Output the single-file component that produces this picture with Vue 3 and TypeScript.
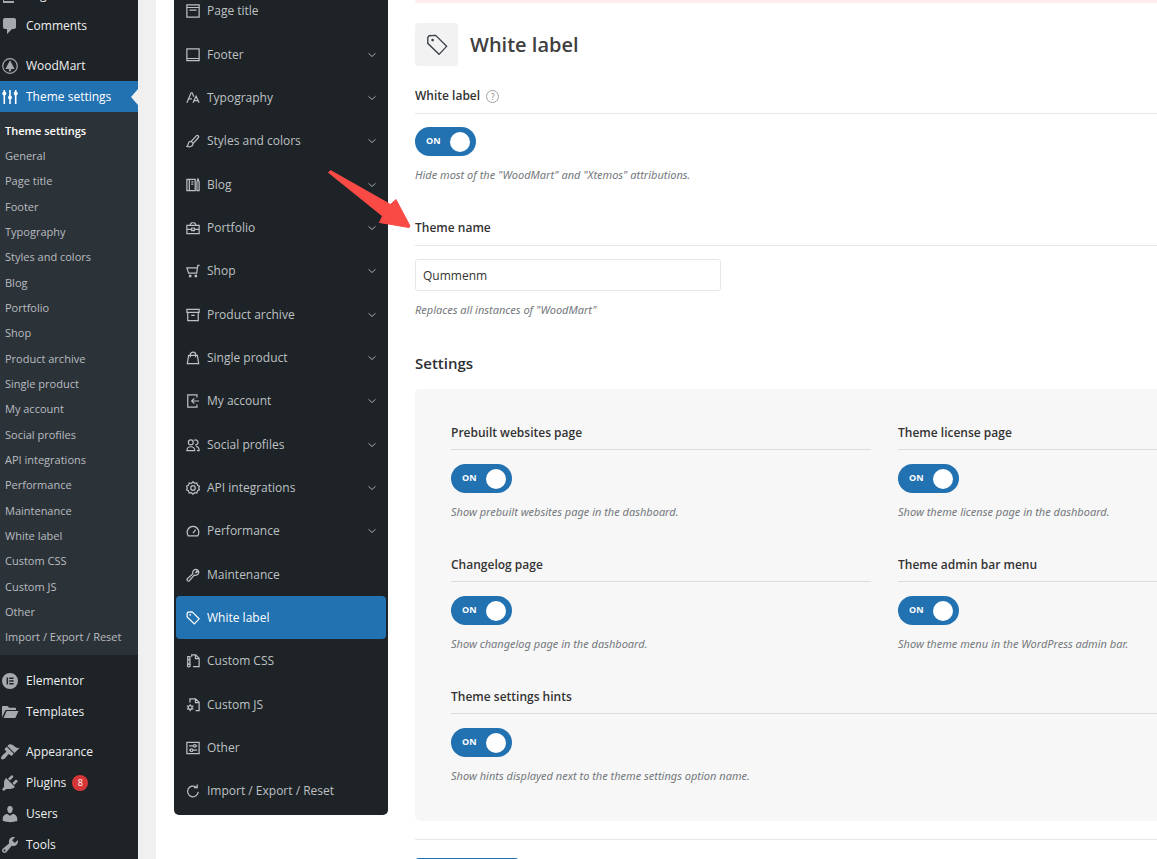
<script setup lang="ts">
import { ref } from 'vue'

interface MenuItem {
  label: string
  icon: string
  badge?: number
  gap?: boolean
}

interface SectionItem {
  label: string
  icon: string
  expandable: boolean
}

interface Option {
  id: string
  title: string
  hint: string
  wide?: boolean
}

const adminIcons: Record<string, string> = {
  pages: '<path d="M6 2h11v12H6zM4 5v11h10v2H3V5z"/>',
  comments:
    '<path d="M5 2h9c1.1 0 2 .9 2 2v7c0 1.1-.9 2-2 2h-2l-5 5v-5H5c-1.1 0-2-.9-2-2V4c0-1.1.9-2 2-2z"/>',
  woodmart:
    '<circle cx="10" cy="10" r="7.3" fill="none" stroke="currentColor" stroke-width="1.2"/><path d="M10 4.2l4.6 8.8h-3.8l.5 2.2H8.700l.5-2.200H5.400z"/>',
  sliders:
    '<path d="M3.500 3h1.600v14H3.500zM9.200 3h1.600v14H9.200zM14.900 3h1.600v14h-1.600z"/><circle cx="4.300" cy="6.500" r="2"/><circle cx="10" cy="10.500" r="2"/><circle cx="15.700" cy="6.500" r="2"/>',
  elementor:
    '<path fill-rule="evenodd" d="M10 2a8 8 0 100 16 8 8 0 000-16zM6.600 6.600h1.500v6.800H6.600zM9.300 6.600h4.300V8H9.300zM9.300 9.300h4.300v1.400H9.300zM9.300 12h4.300v1.400H9.300z"/>',
  templates:
    '<path d="M2 15.500V5c0-.6.400-1 1-1h4.500l1.700 1.800H15c.6 0 1 .4 1 1V8H6.300c-.5 0-1 .3-1.200.8z"/><path d="M3.600 16L6.300 9.600c.1-.3.400-.5.700-.5H18.500L15.600 15.500c-.1.300-.4.500-.7.500z"/>',
  appearance:
    '<path d="M14.480 11.060L7.410 3.990l1.500-1.500c.5-.56 2.300-.47 3.510.32 1.210.8 1.430 1.280 2.910 2.100 1.180.64 2.450 1.260 4.450.85zm-.71.71L6.700 4.700 4.930 6.470c-.39.39-.39 1.020 0 1.410l1.060 1.060c.39.39.39 1.030 0 1.420-.6.600-1.430 1.110-2.210 1.690-.35.26-.7.530-1.010.84C1.430 14.230.400 16.080 1.400 17.070c.99 1 2.840-.03 4.180-1.360.31-.31.58-.66.85-1.020.57-.78 1.080-1.610 1.690-2.210.39-.39 1.020-.39 1.410 0l1.060 1.060c.39.39 1.020.39 1.410 0z"/>',
  plugins:
    '<path d="M13.110 4.360L9.870 7.600 8 5.730l3.240-3.240c.35-.34 1.050-.2 1.560.32.52.51.66 1.210.31 1.550zm-8 1.770l.91-1.120 9.010 9.010-1.190.84c-.71.71-2.630 1.160-3.820 1.160H6.140L4.900 17.260c-.59.59-1.540.59-2.120 0-.59-.58-.59-1.530 0-2.120l1.240-1.240v-3.880c0-1.130.4-3.190 1.090-3.890zm7.260 3.970l3.240-3.240c.34-.35 1.040-.21 1.550.31.52.51.66 1.210.31 1.550l-3.240 3.250z"/>',
  users:
    '<path d="M10 9.250c-2.270 0-2.730-3.440-2.730-3.440C7 4.020 7.820 2 9.970 2c2.160 0 2.980 2.020 2.710 3.810 0 0-.41 3.440-2.680 3.440zm0 2.570L12.720 10c2.390 0 4.520 2.330 4.520 4.530v2.490s-3.650 1.130-7.240 1.130c-3.650 0-7.240-1.130-7.240-1.130v-2.490c0-2.250 1.940-4.480 4.470-4.480z"/>',
  tools:
    '<path d="M16.680 9.770c-1.340 1.340-3.300 1.670-4.950.99l-5.410 6.520c-.99.99-2.590.99-3.580 0s-.99-2.590 0-3.570l6.520-5.420c-.68-1.650-.35-3.610.99-4.950 1.280-1.280 3.120-1.620 4.720-1.060l-2.890 2.890 2.820 2.820 2.860-2.870c.53 1.580.18 3.390-1.080 4.650zM3.810 16.210c.4.39 1.040.39 1.430 0 .4-.4.4-1.040 0-1.430-.39-.4-1.030-.4-1.430 0-.39.39-.39 1.030 0 1.430z"/>',
}

const sectionIcons: Record<string, string> = {
  pageTitle: '<path d="M1 1h14v14H1zM1 4h14M4 7h8"/>',
  footer: '<path d="M1 1h14v13.500H1zM1 12h14"/>',
  typography: '<path d="M1 13.500L5.800 2H7l2 4.500M3.200 9h3.600M8 13.500L11.500 6l3.500 7.500M9.300 11h4.500"/>',
  brush:
    '<path d="M6 8.500L12 1.800c1-1 3.200.8 2.200 2.200L8.200 10.800M6 8.500c-2.500-.3-3.300 1.300-3.500 3-.1 1.200-.6 2-1.500 2.800 3 1.100 6.800.2 7.200-3.500zM6 8.500l2.200 2.300"/>',
  blog: '<path d="M1 1.500h9.500v13H1zM3.800 1.500v13M6 4.500h2.500M6 7h2.500M12.500 4.500L13.700 1l1.300 3.500v10h-2.500z"/>',
  portfolio: '<path d="M1 5h14v9.500H1zM5 5V3.500L6.500 2h3L11 3.500V5M1 9.500h5.500M9.500 9.500H15M6.500 8h3v3h-3z"/>',
  cart: '<path d="M15.500 1.500h-2l-1.300 9H3L1 4.500h12"/><path d="M4 13h1.500v1.500H4zM10.500 13H12v1.500h-1.500z" fill="currentColor"/>',
  archive: '<path d="M1 1.500h14V5H1zM2 5v9.500h12V5M6 8.500h4"/>',
  bag: '<path d="M3 5h10l1.500 9.500h-13zM5 7V3.800C5 .5 11 .5 11 3.800V7"/>',
  account: '<path d="M12.500 4V1H2v14h10.500v-3M15 8H6.500M9.500 5L6.500 8l3 3"/>',
  social:
    '<circle cx="5.500" cy="5" r="2.800"/><path d="M1 14.500c0-6 9-6 9 0zM9.500 2.700c2-1.300 4.200.2 4.200 2.300 0 2-1.700 3-3.200 2.800M11.500 9.500c2.200.3 3.500 2 3.500 5h-2.500"/>',
  gear:
    '<path d="M8 .8l1.700 2 2.600-.5.9 2.500 2.200 1.200-.9 2 .9 2-2.200 1.200-.9 2.500-2.600-.5-1.700 2-1.700-2-2.600.5-.9-2.500L.6 10l.9-2-.9-2 2.200-1.200.9-2.500 2.600.5z"/><circle cx="8" cy="8" r="2.600"/>',
  gauge: '<path d="M2.500 13.500C-.5 8 3 2.800 8 2.800s8.500 5.200 5.500 10.700zM8 10.500L11 6.500"/>',
  wrench:
    '<path d="M11.200 5.200l1.900-3C9.800.6 6.800 3.200 7.900 6.600L1.500 12.200c-1.200 1.500.8 3.500 2.300 2.300L9.500 8.200c3.300 1 6-1.700 4.800-4.800l-2.700 2z"/>',
  tag: '<path d="M1.300 2.700L2.200 1.300 7 1l8 8-5.500 5.800L1.300 6.800z"/><circle cx="4.800" cy="4.400" r="1" fill="currentColor" stroke="none"/>',
  css: '<path d="M6.500 3V1H11l4 4v9.500H8M10.800 1v4.300H15M2 3h2.500v8.500H2zM2 6.500h2.500"/><circle cx="3.200" cy="13.200" r="1.600"/>',
  js: '<path d="M4.500 5V1H11l4 4v9.500h-4M10.800 1v4.300H15M4.800 7v1.500M4.800 13v2M1 8.800l1.600 1M8.600 8.800L7 9.800M1 12.900l1.600-1M8.600 12.900l-1.600-1"/><circle cx="4.800" cy="10.800" r="2.200"/>',
  other:
    '<path d="M1 1.500h14v13H1zM3.500 5.500h5M11.500 5.500h1.300M3.500 10.500h1.300M8 10.500h4.800"/><circle cx="10" cy="5.500" r="1.500"/><circle cx="6.300" cy="10.500" r="1.500"/>',
  reset: '<path d="M14 9a6.100 6.100 0 11-2.400-5.400M9.200 4.200h3.600V.6"/>',
}

const topMenu: MenuItem[] = [
  { label: 'Pages', icon: 'pages' },
  { label: 'Comments', icon: 'comments' },
  { label: 'WoodMart', icon: 'woodmart', gap: true },
]

const bottomMenu: MenuItem[] = [
  { label: 'Elementor', icon: 'elementor' },
  { label: 'Templates', icon: 'templates' },
  { label: 'Appearance', icon: 'appearance', gap: true },
  { label: 'Plugins', icon: 'plugins', badge: 8 },
  { label: 'Users', icon: 'users' },
  { label: 'Tools', icon: 'tools' },
]

const submenu: string[] = [
  'Theme settings',
  'General',
  'Page title',
  'Footer',
  'Typography',
  'Styles and colors',
  'Blog',
  'Portfolio',
  'Shop',
  'Product archive',
  'Single product',
  'My account',
  'Social profiles',
  'API integrations',
  'Performance',
  'Maintenance',
  'White label',
  'Custom CSS',
  'Custom JS',
  'Other',
  'Import / Export / Reset',
]

const sections: SectionItem[] = [
  { label: 'Page title', icon: 'pageTitle', expandable: false },
  { label: 'Footer', icon: 'footer', expandable: true },
  { label: 'Typography', icon: 'typography', expandable: true },
  { label: 'Styles and colors', icon: 'brush', expandable: true },
  { label: 'Blog', icon: 'blog', expandable: true },
  { label: 'Portfolio', icon: 'portfolio', expandable: true },
  { label: 'Shop', icon: 'cart', expandable: true },
  { label: 'Product archive', icon: 'archive', expandable: true },
  { label: 'Single product', icon: 'bag', expandable: true },
  { label: 'My account', icon: 'account', expandable: true },
  { label: 'Social profiles', icon: 'social', expandable: true },
  { label: 'API integrations', icon: 'gear', expandable: true },
  { label: 'Performance', icon: 'gauge', expandable: true },
  { label: 'Maintenance', icon: 'wrench', expandable: false },
  { label: 'White label', icon: 'tag', expandable: false },
  { label: 'Custom CSS', icon: 'css', expandable: false },
  { label: 'Custom JS', icon: 'js', expandable: false },
  { label: 'Other', icon: 'other', expandable: false },
  { label: 'Import / Export / Reset', icon: 'reset', expandable: false },
]

const options: Option[] = [
  { id: 'prebuilt', title: 'Prebuilt websites page', hint: 'Show prebuilt websites page in the dashboard.' },
  { id: 'license', title: 'Theme license page', hint: 'Show theme license page in the dashboard.' },
  { id: 'changelog', title: 'Changelog page', hint: 'Show changelog page in the dashboard.' },
  { id: 'adminbar', title: 'Theme admin bar menu', hint: 'Show theme menu in the WordPress admin bar.' },
  {
    id: 'hints',
    title: 'Theme settings hints',
    hint: 'Show hints displayed next to the theme settings option name.',
    wide: true,
  },
]

const activeSection = ref('White label')
const themeName = ref('Qummenm')
const enabled = ref<Record<string, boolean>>({
  whiteLabel: true,
  prebuilt: true,
  license: true,
  changelog: true,
  adminbar: true,
  hints: true,
})
</script>

<template>
  <div class="page">
    <nav class="admin" aria-label="Admin menu">
      <a v-for="item in topMenu" :key="item.label" href="#" class="admin-item" :class="{ gap: item.gap }">
        <svg class="admin-icon" viewBox="0 0 20 20" aria-hidden="true" v-html="adminIcons[item.icon]"></svg>
        <span>{{ item.label }}</span>
      </a>
      <a href="#" class="admin-item current" aria-current="page">
        <svg class="admin-icon" viewBox="0 0 20 20" aria-hidden="true" v-html="adminIcons.sliders"></svg>
        <span>Theme settings</span>
      </a>
      <ul class="submenu">
        <li v-for="entry in submenu" :key="entry">
          <a href="#">{{ entry }}</a>
        </li>
      </ul>
      <a v-for="item in bottomMenu" :key="item.label" href="#" class="admin-item" :class="{ gap: item.gap }">
        <svg class="admin-icon" viewBox="0 0 20 20" aria-hidden="true" v-html="adminIcons[item.icon]"></svg>
        <span>{{ item.label }}</span>
        <span v-if="item.badge" class="badge">{{ item.badge }}</span>
      </a>
    </nav>

    <div class="workspace">
      <nav class="sections" aria-label="Theme settings sections">
        <a
          v-for="section in sections"
          :key="section.label"
          href="#"
          class="section"
          :class="{ active: section.label === activeSection }"
          @click.prevent="activeSection = section.label"
        >
          <svg class="section-icon" viewBox="0 0 16 16" aria-hidden="true" v-html="sectionIcons[section.icon]"></svg>
          <span class="section-label">{{ section.label }}</span>
          <svg v-if="section.expandable" class="chevron" viewBox="0 0 8 8" aria-hidden="true">
            <path d="M0.500 2.300L4 5.500L7.500 2.300" />
          </svg>
        </a>
      </nav>

      <main class="content">
        <div class="notice"></div>
        <header class="heading">
          <span class="heading-icon">
            <svg viewBox="0 0 16 16" aria-hidden="true" v-html="sectionIcons.tag"></svg>
          </span>
          <h1>White label</h1>
        </header>

        <section class="field">
          <div class="field-title">
            <label for="whiteLabel">White label</label>
            <button type="button" class="help" aria-label="Help">?</button>
          </div>
          <label class="toggle">
            <input id="whiteLabel" v-model="enabled.whiteLabel" type="checkbox" />
            <span class="state">{{ enabled.whiteLabel ? 'ON' : 'OFF' }}</span>
            <span class="knob"></span>
          </label>
          <p class="hint">Hide most of the "WoodMart" and "Xtemos" attributions.</p>
        </section>

        <section class="field">
          <div class="field-title"><label for="themeName">Theme name</label></div>
          <input id="themeName" v-model="themeName" class="text-input" type="text" />
          <p class="hint">Replaces all instances of "WoodMart"</p>
        </section>

        <h2>Settings</h2>
        <div class="panel">
          <section v-for="option in options" :key="option.id" class="field" :class="{ wide: option.wide }">
            <div class="field-title">
              <label :for="option.id">{{ option.title }}</label>
            </div>
            <label class="toggle">
              <input :id="option.id" v-model="enabled[option.id]" type="checkbox" />
              <span class="state">{{ enabled[option.id] ? 'ON' : 'OFF' }}</span>
              <span class="knob"></span>
            </label>
            <p class="hint">{{ option.hint }}</p>
          </section>
        </div>

        <footer class="actions">
          <button type="button" class="save" aria-label="Save"></button>
        </footer>
      </main>
    </div>

    <svg class="pointer" viewBox="0 0 84 60" aria-hidden="true">
      <path d="M1.500 3.500L3.500 1.500L63.500 35.500L69 30.500L83 57L82 58.500L52.500 53.500L55.500 47z" />
    </svg>
  </div>
</template>

<style>
body {
  margin: 0;
  background: #f0f0f1;
  overflow: hidden;
}
</style>

<style scoped>
.page {
  position: relative;
  display: flex;
  height: 100vh;
  overflow: hidden;
  color: #3c434a;
  font-family: 'Segoe UI', 'Open Sans', 'Noto Sans', sans-serif;
  font-size: 12px;
  line-height: 20px;
}

a {
  color: inherit;
  text-decoration: none;
}

/* Admin menu */
.admin {
  flex: none;
  width: 138px;
  margin-top: -21px;
  background: #1d2327;
}

.admin-item {
  position: relative;
  display: flex;
  align-items: center;
  gap: 6px;
  height: 31px;
  color: #f0f0f1;
}

.admin-item.gap {
  margin-top: 9px;
}

.admin-icon {
  flex: none;
  width: 20px;
  height: 20px;
  color: #a7aaad;
  fill: currentColor;
}

.admin-item.current {
  background: #2271b1;
  color: #fff;
}

.current .admin-icon {
  color: #fff;
}

.current::after {
  content: '';
  position: absolute;
  top: 8px;
  right: 0;
  border: solid transparent;
  border-width: 8px 7px 8px 0;
  border-right-color: #f0f0f1;
}

.badge {
  width: 16px;
  height: 16px;
  border-radius: 50%;
  background: #d63638;
  color: #fff;
  font-size: 9px;
  line-height: 16px;
  text-align: center;
}

.submenu {
  margin: 0 0 10px;
  padding: 6px 0 5px;
  background: #2c3338;
  list-style: none;
  font-size: 11px;
  line-height: 25px;
  color: #b9bcc0;
}

.submenu li {
  padding-left: 5px;
}

.submenu li:nth-child(3n) {
  padding-bottom: 1px;
}

.submenu li:first-child {
  color: #fff;
  font-weight: 600;
}

/* Section navigation */
.workspace {
  flex: 1;
  display: flex;
  align-items: flex-start;
  gap: 27px;
  min-width: 0;
  margin-left: 18px;
  padding-left: 18px;
  background: #fff;
  overflow: hidden;
}

.sections {
  flex: none;
  box-sizing: border-box;
  width: 214px;
  margin-top: -13px;
  padding: 2px;
  border-radius: 5px;
  background: #1d2327;
  color: #bfc1c3;
}

.section {
  display: flex;
  align-items: center;
  gap: 7px;
  height: 43px;
  padding: 0 10px;
  border-radius: 4px;
}

.section:nth-child(3n + 1) {
  height: 44px;
}

.section.active {
  background: #2271b1;
  color: #fff;
}

.section-label {
  flex: 1;
}

.section-icon,
.heading-icon svg {
  flex: none;
  width: 14px;
  height: 14px;
  fill: none;
  stroke: currentColor;
  stroke-width: 1.4;
}

.chevron {
  width: 8px;
  height: 8px;
  fill: none;
  stroke: #a8abae;
}

/* Content */
.content {
  flex: 1 0 939px;
}

.notice {
  height: 3px;
  border-radius: 0 0 4px 4px;
  background: #ffeded;
}

.heading {
  display: flex;
  align-items: center;
  gap: 12px;
  margin: 20px 0;
}

.heading-icon {
  display: flex;
  align-items: center;
  justify-content: center;
  width: 43px;
  height: 43px;
  border-radius: 4px;
  background: #f2f2f2;
}

.heading-icon svg {
  width: 22px;
  height: 22px;
  stroke-width: 1;
}

h1 {
  margin: 0;
  color: #3f3f3f;
  font-size: 20px;
  font-weight: 600;
  line-height: 28px;
}

h2 {
  margin: 0 0 16px;
  color: #2b2f33;
  font-size: 15px;
  font-weight: 600;
  line-height: 20px;
}

.field {
  margin-bottom: 33px;
}

.field-title {
  display: flex;
  align-items: center;
  gap: 6px;
  margin-bottom: 13px;
  padding-bottom: 7px;
  border-bottom: 1px solid #e8e8e8;
  color: #333;
  font-weight: 600;
}

.help {
  box-sizing: border-box;
  width: 13px;
  height: 13px;
  padding: 0;
  border: 1px solid #a0a0a0;
  border-radius: 50%;
  background: none;
  color: #888;
  font-family: inherit;
  font-size: 9px;
  line-height: 11px;
  text-align: center;
}

.toggle {
  display: flex;
  align-items: center;
  justify-content: space-between;
  box-sizing: border-box;
  width: 61px;
  height: 29px;
  padding: 0 6px 0 11px;
  border-radius: 15px;
  background: #2271b1;
  color: #fff;
  font-size: 9px;
  font-weight: 700;
}

.toggle input {
  position: absolute;
  opacity: 0;
  pointer-events: none;
}

.toggle:not(:has(input:checked)) {
  background: #a7aaad;
}

.state {
  padding-bottom: 2px;
}

.knob {
  width: 20px;
  height: 20px;
  border-radius: 50%;
  background: #fff;
}

.hint {
  margin: 9px 0 0;
  color: #74787c;
  font-family: 'Segoe UI', 'Noto Sans', 'Open Sans', sans-serif;
  font-size: 11px;
  font-style: italic;
}

.text-input {
  display: block;
  box-sizing: border-box;
  width: 306px;
  height: 32px;
  padding: 0 7px;
  border: 1px solid #e6e6e6;
  border-radius: 3px;
  background: #fff;
  color: #333;
  font-family: inherit;
  font-size: 12px;
}

.panel {
  display: grid;
  grid-template-columns: repeat(2, 1fr);
  gap: 33px 27px;
  padding: 34px 36px 35px;
  border-radius: 5px;
  background: #f7f7f7;
}

.panel .field {
  margin: 0;
}

.panel .field-title {
  margin-bottom: 14px;
  padding-bottom: 6px;
  border-color: #dcdcdc;
}

.wide {
  grid-column: 1 / -1;
}

.actions {
  margin-top: 18px;
  padding-top: 18px;
  border-top: 1px solid #e8e8e8;
}

.save {
  width: 104px;
  height: 36px;
  border: 0;
  border-radius: 4px;
  background: #2271b1;
}

/* Callout arrow laid over the page */
.pointer {
  position: absolute;
  top: 169px;
  left: 327px;
  width: 84px;
  height: 60px;
  fill: #f94a45;
  stroke: #f94a45;
  stroke-linejoin: round;
  pointer-events: none;
}
</style>
